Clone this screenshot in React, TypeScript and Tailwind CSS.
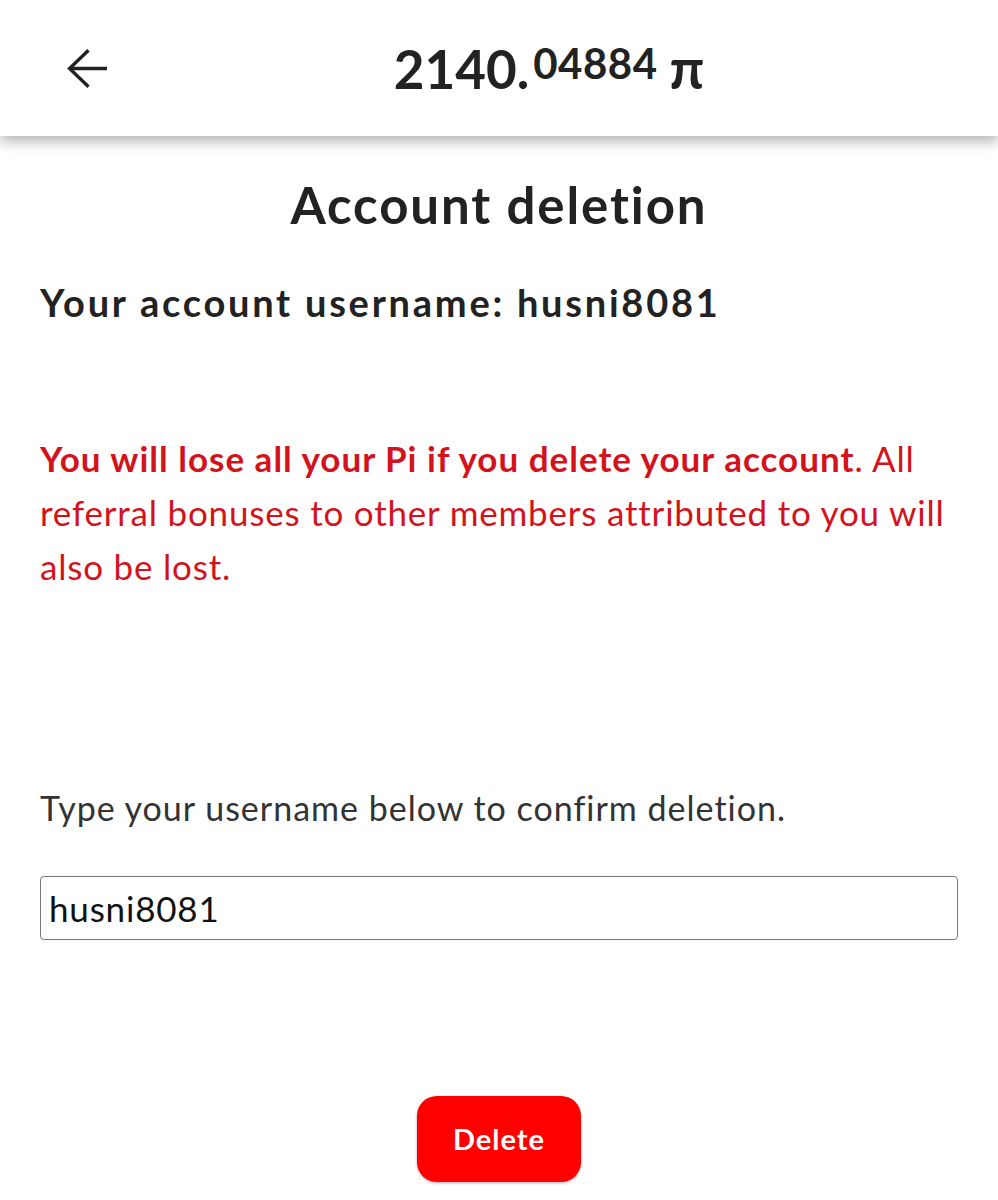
export default function App() {
  return (
    <div className="min-h-[1200px] bg-white text-[#222] font-['Lato','Noto_Sans',sans-serif]">
      {/* Header */}
      <div className="relative z-10 flex h-[136px] bg-white shadow-[0_6px_12px_rgba(0,0,0,0.28)]">
        <div className="w-[100px] shrink-0 pl-[67px] pt-[49px]">
          <svg className="shrink-0" width="40" height="39" viewBox="0 0 40 39" fill="none" stroke="#222" strokeWidth="3.4">
            <path d="M3 19.5H40" />
            <path d="M21.5 1.2L2.6 19.5L21.5 37.8" />
          </svg>
        </div>
        <div className="flex flex-1 items-start justify-center pt-[42px]">
          <span className="text-[53px] font-bold leading-none">2140.</span>
          <span className="ml-[4px] mt-0 text-[42px] font-bold leading-none tracking-[0.5px]">04884</span>
          <span className="ml-[12px] -mt-[1px] text-[55px] font-bold leading-none">π</span>
        </div>
      </div>

      {/* Content */}
      <div className="px-[40px]">
        <h1 className="pt-[43px] text-center text-[51px] font-bold leading-none tracking-[1.9px]">Account deletion</h1>
        <p className="mt-[53px] text-[38px] font-bold leading-none tracking-[2.75px]">Your account username: husni8081</p>

        <p className="mt-[110px] text-[35px] leading-[54px] tracking-[0.8px] text-[#d3131c]">
          <span className="font-bold tracking-[1px]">You will lose all your Pi if you delete your account</span>. All referral bonuses to other members attributed to you will also be lost.
        </p>

        <p className="mt-[198px] text-[34px] leading-none tracking-[1px] text-[#333]">Type your username below to confirm deletion.</p>

        <input
          readOnly
          value="husni8081"
          className="mt-[51px] h-[64px] w-full rounded-[4px] border border-[#777] px-[8px] text-[35px] tracking-[0.8px] text-[#111] outline-none"
        />

        <div className="mt-[156px] flex justify-center">
          <button className="h-[86px] w-[164px] rounded-[20px] bg-[#ff0000] text-[29px] font-bold tracking-[1px] text-white shadow-[0_1px_3px_rgba(0,0,0,0.35)]">
            Delete
          </button>
        </div>
      </div>
    </div>
  );
}
